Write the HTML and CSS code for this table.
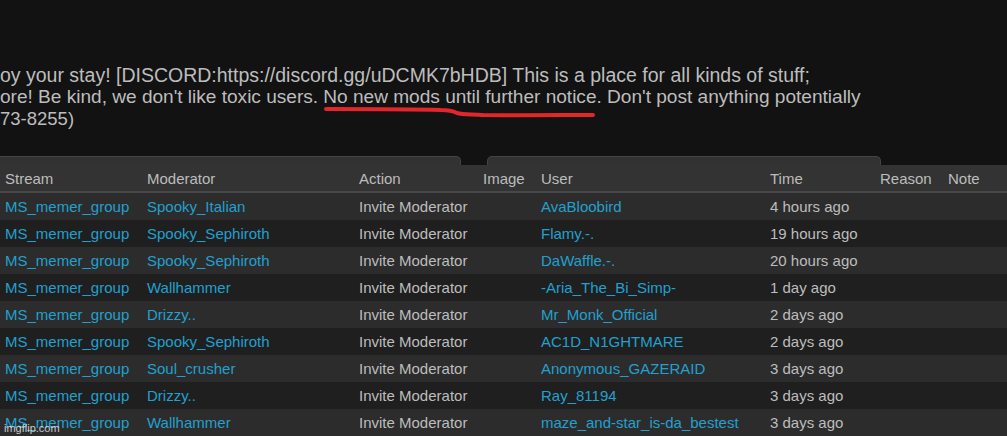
FILE: index.html
```html
<!DOCTYPE html>
<html>
<head>
<meta charset="utf-8">
<link rel="stylesheet" href="styles.css">
</head>
<body>
<div class="page">
  <div class="intro">
    <p class="line l1">oy your stay! [DISCORD:https://discord.gg/uDCMK7bHDB] This is a place for all kinds of stuff;</p>
    <p class="line l2">ore! Be kind, we don't like toxic users. <span class="marked">No new mods until further notice.</span> Don't post anything potentially</p>
    <p class="line l3">73-8255)</p>
    <svg class="scribble" width="290" height="16" viewBox="0 0 290 16">
      <path d="M3 4 C40 4 90 4 118 5 C125 5 130 6 134 8 C140 10 150 9 160 10 C200 10.5 240 10 270 10" fill="none" stroke="#e3262c" stroke-width="4" stroke-linecap="round"/>
    </svg>
  </div>
  <div class="tabs">
    <div class="tab tab-a"></div>
    <div class="tab tab-b"></div>
  </div>
  <table class="log">
    <colgroup>
      <col class="c1"><col class="c2"><col class="c3"><col class="c4"><col class="c5"><col class="c6"><col class="c7"><col class="c8">
    </colgroup>
    <thead>
      <tr><th>Stream</th><th>Moderator</th><th>Action</th><th>Image</th><th>User</th><th>Time</th><th>Reason</th><th>Note</th></tr>
    </thead>
    <tbody>
      <tr><td class="lnk">MS_memer_group</td><td class="lnk">Spooky_Italian</td><td>Invite Moderator</td><td></td><td class="lnk">AvaBloobird</td><td>4 hours ago</td><td></td><td></td></tr>
      <tr><td class="lnk">MS_memer_group</td><td class="lnk">Spooky_Sephiroth</td><td>Invite Moderator</td><td></td><td class="lnk">Flamy.-.</td><td>19 hours ago</td><td></td><td></td></tr>
      <tr><td class="lnk">MS_memer_group</td><td class="lnk">Spooky_Sephiroth</td><td>Invite Moderator</td><td></td><td class="lnk">DaWaffle.-.</td><td>20 hours ago</td><td></td><td></td></tr>
      <tr><td class="lnk">MS_memer_group</td><td class="lnk">Wallhammer</td><td>Invite Moderator</td><td></td><td class="lnk">-Aria_The_Bi_Simp-</td><td>1 day ago</td><td></td><td></td></tr>
      <tr><td class="lnk">MS_memer_group</td><td class="lnk">Drizzy..</td><td>Invite Moderator</td><td></td><td class="lnk">Mr_Monk_Official</td><td>2 days ago</td><td></td><td></td></tr>
      <tr><td class="lnk">MS_memer_group</td><td class="lnk">Spooky_Sephiroth</td><td>Invite Moderator</td><td></td><td class="lnk">AC1D_N1GHTMARE</td><td>2 days ago</td><td></td><td></td></tr>
      <tr><td class="lnk">MS_memer_group</td><td class="lnk">Soul_crusher</td><td>Invite Moderator</td><td></td><td class="lnk">Anonymous_GAZERAID</td><td>3 days ago</td><td></td><td></td></tr>
      <tr><td class="lnk">MS_memer_group</td><td class="lnk">Drizzy..</td><td>Invite Moderator</td><td></td><td class="lnk">Ray_81194</td><td>3 days ago</td><td></td><td></td></tr>
      <tr><td class="lnk">MS_memer_group</td><td class="lnk">Wallhammer</td><td>Invite Moderator</td><td></td><td class="lnk">maze_and-star_is-da_bestest</td><td>3 days ago</td><td></td><td></td></tr>
    </tbody>
  </table>
  <div class="watermark">imgflip.com</div>
</div>
</body>
</html>
```

FILE: styles.css
```css
html, body {
  margin: 0;
  padding: 0;
  background: #121212;
  overflow: hidden;
}
.page {
  position: relative;
  width: 1007px;
  height: 436px;
  overflow: hidden;
  font-family: "Liberation Sans", Arial, sans-serif;
}
.intro {
  position: relative;
  padding-top: 64px;
  color: #bdbdbd;
  line-height: 22px;
}
.line {
  margin: 0;
  white-space: nowrap;
}
.l1 {
  font-size: 19.5px;
}
.l2 {
  font-size: 19.1px;
  letter-spacing: -0.02px;
}
.l3 {
  font-size: 18.5px;
}
.scribble {
  position: absolute;
  left: 323px;
  top: 105px;
}
.tabs {
  margin-top: 26px;
  display: flex;
  height: 9px;
}
.tab {
  height: 9px;
  background: #323232;
  border-top: 1px solid #444;
  border-right: 1px solid #444;
  border-top-right-radius: 5px;
  box-sizing: border-box;
}
.tab-a {
  width: 461px;
}
.tab-b {
  margin-left: 26px;
  width: 394px;
  border-left: 1px solid #444;
  border-top-left-radius: 5px;
}
.log {
  border-collapse: collapse;
  table-layout: fixed;
  width: 1040px;
  font-size: 15px;
}
.c1 { width: 142px; }
.c2 { width: 212px; }
.c3 { width: 124px; }
.c4 { width: 58px; }
.c5 { width: 229px; }
.c6 { width: 110px; }
.c7 { width: 68px; }
.c8 { width: 97px; }
th, td {
  text-align: left;
  font-weight: normal;
  padding: 0 0 0 5px;
  height: 27px;
  white-space: nowrap;
  overflow: hidden;
}
th {
  background: #333333;
  color: #bcbcbc;
  height: 26px;
  border-bottom: 2px solid #484848;
}
td {
  color: #bdbdbd;
}
td.lnk {
  color: #22a0cf;
}
tbody tr:nth-child(odd) {
  background: #2c2c2c;
}
tbody tr:nth-child(even) {
  background: #1f1f1f;
}
.watermark {
  position: absolute;
  left: 4px;
  top: 422px;
  font-size: 11px;
  color: rgba(255,255,255,0.75);
  line-height: 13px;
}
```
